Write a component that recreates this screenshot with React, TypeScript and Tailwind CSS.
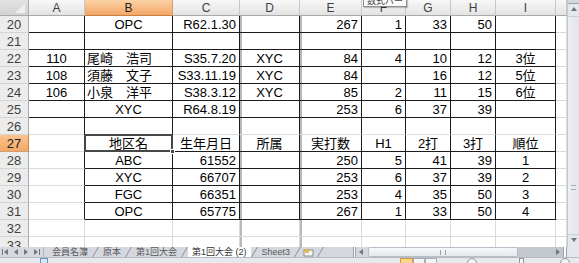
import React from "react";

const COLS = ["A", "B", "C", "D", "E", "F", "G", "H", "I", ""];
const WIDTHS = "grid-cols-[29px_56px_88px_67px_60px_62px_44px_45px_45px_60px_11px]";

const EMPTY = ["", "", "", "", "", "", "", "", "", ""];

const ROWS: { n: number; cells: string[] }[] = [
  { n: 20, cells: ["", "OPC", "R62.1.30", "", "267", "1", "33", "50", "", ""] },
  { n: 21, cells: EMPTY },
  { n: 22, cells: ["110", "尾崎　浩司", "S35.7.20", "XYC", "84", "4", "10", "12", "3位", ""] },
  { n: 23, cells: ["108", "須藤　文子", "S33.11.19", "XYC", "84", "", "16", "12", "5位", ""] },
  { n: 24, cells: ["106", "小泉　洋平", "S38.3.12", "XYC", "85", "2", "11", "15", "6位", ""] },
  { n: 25, cells: ["", "XYC", "R64.8.19", "", "253", "6", "37", "39", "", ""] },
  { n: 26, cells: EMPTY },
  { n: 27, cells: ["", "地区名", "生年月日", "所属", "実打数", "H1", "2打", "3打", "順位", ""] },
  { n: 28, cells: ["", "ABC", "61552", "", "250", "5", "41", "39", "1", ""] },
  { n: 29, cells: ["", "XYC", "66707", "", "253", "6", "37", "39", "2", ""] },
  { n: 30, cells: ["", "FGC", "66351", "", "253", "4", "35", "50", "3", ""] },
  { n: 31, cells: ["", "OPC", "65775", "", "267", "1", "33", "50", "4", ""] },
  { n: 32, cells: EMPTY },
  { n: 33, cells: EMPTY },
];

function align(row: number, ci: number) {
  if (row === 27) return "justify-center";
  if (ci === 1 && row >= 22 && row <= 24) return "justify-start pl-[2px]";
  if (ci === 0 || ci === 1 || ci === 3 || ci === 8) return "justify-center";
  return "justify-end pr-[3px]";
}

function Cell({ row, ci, text }: { row: number; ci: number; text: string }) {
  const rightBlack = row >= 20 && row <= 31 && ci <= 8;
  const bottomBlack = (row >= 20 && row <= 25 && ci <= 8) || (row >= 27 && row <= 31 && ci >= 1 && ci <= 8);
  const pageBreak = ci === 3 || ci === 4;
  const selected = row === 27 && ci === 1;

  return (
    <div
      className={`relative flex h-[17px] items-center overflow-visible whitespace-nowrap border-r border-b text-[13px] leading-none text-black ${align(row, ci)} ${
        rightBlack ? "border-r-[#1c1c1c]" : "border-r-[#dadada]"
      } ${bottomBlack ? "border-b-[#1c1c1c]" : "border-b-[#dadada]"} ${
        pageBreak ? "shadow-[inset_2px_0_0_#b9b9b9]" : ""
      }`}
    >
      {text}
      {selected ? (
        <div className="absolute -top-px -left-px -right-px -bottom-px z-10 border-2 border-[#474747]">
          <div className="absolute -right-[4px] -bottom-[4px] h-[5px] w-[5px] border border-white bg-[#474747]" />
        </div>
      ) : null}
    </div>
  );
}

function Tri({ dir }: { dir: "l" | "r" | "u" | "d" }) {
  const pts = { l: "5,1 1,4 5,7", r: "1,1 5,4 1,7", u: "1,5 4,1 7,5", d: "1,1 4,5 7,1" }[dir];
  return (
    <svg width="8" height="8" viewBox="0 0 8 8">
      <polygon points={pts} fill="#6f7780" />
    </svg>
  );
}

function Slant() {
  return (
    <svg width="7" height="10" viewBox="0 0 7 10" className="shrink-0">
      <line x1="0.5" y1="10" x2="6.5" y2="0" stroke="#8a9099" strokeWidth="1" />
    </svg>
  );
}

function TabBar() {
  return (
    <div className="flex h-[10px] items-stretch overflow-hidden bg-[#d5d9df] text-[9px] leading-[10px] text-[#5a5a5a]">
      <div className="flex w-[44px] items-center gap-[2px] pl-[2px] border-r border-[#b3b9c1]">
        <span className="flex items-center">
          <span className="h-[6px] w-px bg-[#6f7780]" />
          <Tri dir="l" />
        </span>
        <Tri dir="l" />
        <Tri dir="r" />
        <span className="flex items-center">
          <Tri dir="r" />
          <span className="-ml-[2px] h-[6px] w-px bg-[#6f7780]" />
        </span>
      </div>
      <div className="flex items-stretch pl-[4px]">
        <span className="px-[4px]">会員名簿</span>
        <Slant />
        <span className="px-[4px]">原本</span>
        <Slant />
        <span className="px-[4px]">第1回大会</span>
        <Slant />
        <span className="bg-white px-[4px] text-[#333]">第1回大会 (2)</span>
        <Slant />
        <span className="px-[4px]">Sheet3</span>
        <Slant />
        <span className="flex items-center px-[2px]">
          <svg width="12" height="9" viewBox="0 0 12 9">
            <rect x="1" y="2" width="9" height="6" fill="#f4f6f8" stroke="#8a9099" />
            <circle cx="4" cy="3" r="2.2" fill="#f0b43c" />
          </svg>
        </span>
        <Slant />
      </div>
      <div className="flex-1" />
      <div className="flex w-[226px] items-stretch">
        <div className="w-[3px] border-x border-[#9aa1aa] bg-white" />
        <div className="flex w-[12px] items-center justify-center">
          <Tri dir="l" />
        </div>
        <div className="relative flex w-[150px] items-center justify-center rounded-[2px] border border-[#b7bec7] bg-gradient-to-b from-[#f7f8fa] to-[#e6e9ed]">
          <span className="h-[5px] w-[6px] border-x border-[#9aa1aa]" />
        </div>
        <div className="flex-1 bg-[#c3c8cf]" />
        <div className="flex w-[8px] items-center justify-center bg-[#c3c8cf]">
          <Tri dir="r" />
        </div>
        <div className="w-[4px] border-x border-[#9aa1aa] bg-white" />
        <div className="w-[12px] bg-[#e4e7eb]" />
      </div>
    </div>
  );
}

function StatusBar() {
  return (
    <div className="flex h-[6px] items-start overflow-hidden border-t border-[#b5bcc5] bg-[#e6e9ed]">
      <div className="ml-[40px] h-[6px] w-[8px] border border-[#6d8fc4] bg-[#dbe6f6]" />
      <div className="ml-[352px] flex">
        <div className="h-[6px] w-[13px] border border-[#d69a3c] bg-[#f8d68c]" />
        <div className="h-[6px] w-[12px] border border-[#a8afb8] bg-[#f4f5f7]" />
        <div className="h-[6px] w-[12px] border border-[#a8afb8] bg-[#f4f5f7]" />
      </div>
      <div className="ml-[30px] h-[10px] w-[10px] rounded-full border border-[#8f97a1] bg-[#f4f5f7]" />
      <div className="ml-[42px] h-[6px] w-[5px] border border-[#8f97a1] bg-[#f4f5f7]" />
      <div className="ml-[36px] h-[10px] w-[10px] rounded-full border border-[#8f97a1] bg-[#f4f5f7]" />
    </div>
  );
}

function VScroll() {
  return (
    <div className="flex w-[12px] flex-col border-l border-[#c3c8cf] bg-[#e4e7eb]">
      <div className="h-[4px] border-b border-[#9aa1aa] bg-[#d3d8de]" />
      <div className="flex h-[12px] items-center justify-center">
        <Tri dir="u" />
      </div>
      <div className="flex flex-1 flex-col items-center border-y border-[#cbd0d7] bg-gradient-to-r from-[#eef0f3] to-[#e1e4e8]">
        <div className="h-[168px]" />
        <div className="h-[5px] w-[5px] border-y border-[#a3aab3]" />
      </div>
      <div className="flex h-[12px] items-center justify-center">
        <Tri dir="d" />
      </div>
    </div>
  );
}

export default function App() {
  return (
    <div className="flex h-[263px] w-[579px] flex-col overflow-hidden bg-white font-['Liberation_Sans','Noto_Sans_CJK_JP',sans-serif]">
      <div className="flex h-[247px] min-h-0">
        <div className="relative w-[567px] overflow-hidden">
          <div className={`grid ${WIDTHS}`}>
            <div className="flex h-[16px] items-end justify-end border-r border-b border-[#a9a9a9] bg-gradient-to-b from-[#e2e2e2] to-[#d2d2d2] pr-[3px] pb-[2px]">
              <svg width="10" height="10" viewBox="0 0 10 10">
                <polygon points="10,0 10,10 0,10" fill="#eeeeee" />
              </svg>
            </div>
            {COLS.map((c, i) => (
              <div
                key={`h${i}`}
                className={`flex h-[16px] items-center justify-center border-r border-b text-[12px] leading-none ${
                  i === 1
                    ? "border-r-[#d0a070] border-b-[#c8803c] bg-gradient-to-b from-[#fad2a4] to-[#f3a766] text-[#222]"
                    : "border-r-[#c6c6c6] border-b-[#a9a9a9] bg-gradient-to-b from-[#f8f8f8] to-[#e3e3e3] text-[#3f3f3f]"
                }`}
              >
                {c}
              </div>
            ))}
            {ROWS.map((r) => (
              <React.Fragment key={r.n}>
                <div
                  className={`flex h-[17px] items-center justify-center border-r border-b text-[13px] leading-none ${
                    r.n === 27
                      ? "border-r-[#c8803c] border-b-[#d0a070] bg-gradient-to-b from-[#f9c58e] to-[#f3a766] text-[#222]"
                      : "border-r-[#a9a9a9] border-b-[#d4d4d4] bg-[#ececec] text-[#3f3f3f]"
                  }`}
                >
                  {r.n}
                </div>
                {r.cells.map((t, ci) => (
                  <Cell key={ci} row={r.n} ci={ci} text={t} />
                ))}
              </React.Fragment>
            ))}
          </div>
          <div className="absolute left-[363px] -top-[4px] z-20 flex h-[11px] w-[44px] items-center justify-center border border-[#8c8c8c] bg-[#fbfbfb] text-[9px] leading-none text-[#444] shadow-[1px_1px_1px_rgba(0,0,0,0.2)]">
            数式バー
          </div>
        </div>
        <VScroll />
      </div>
      <TabBar />
      <StatusBar />
    </div>
  );
}
